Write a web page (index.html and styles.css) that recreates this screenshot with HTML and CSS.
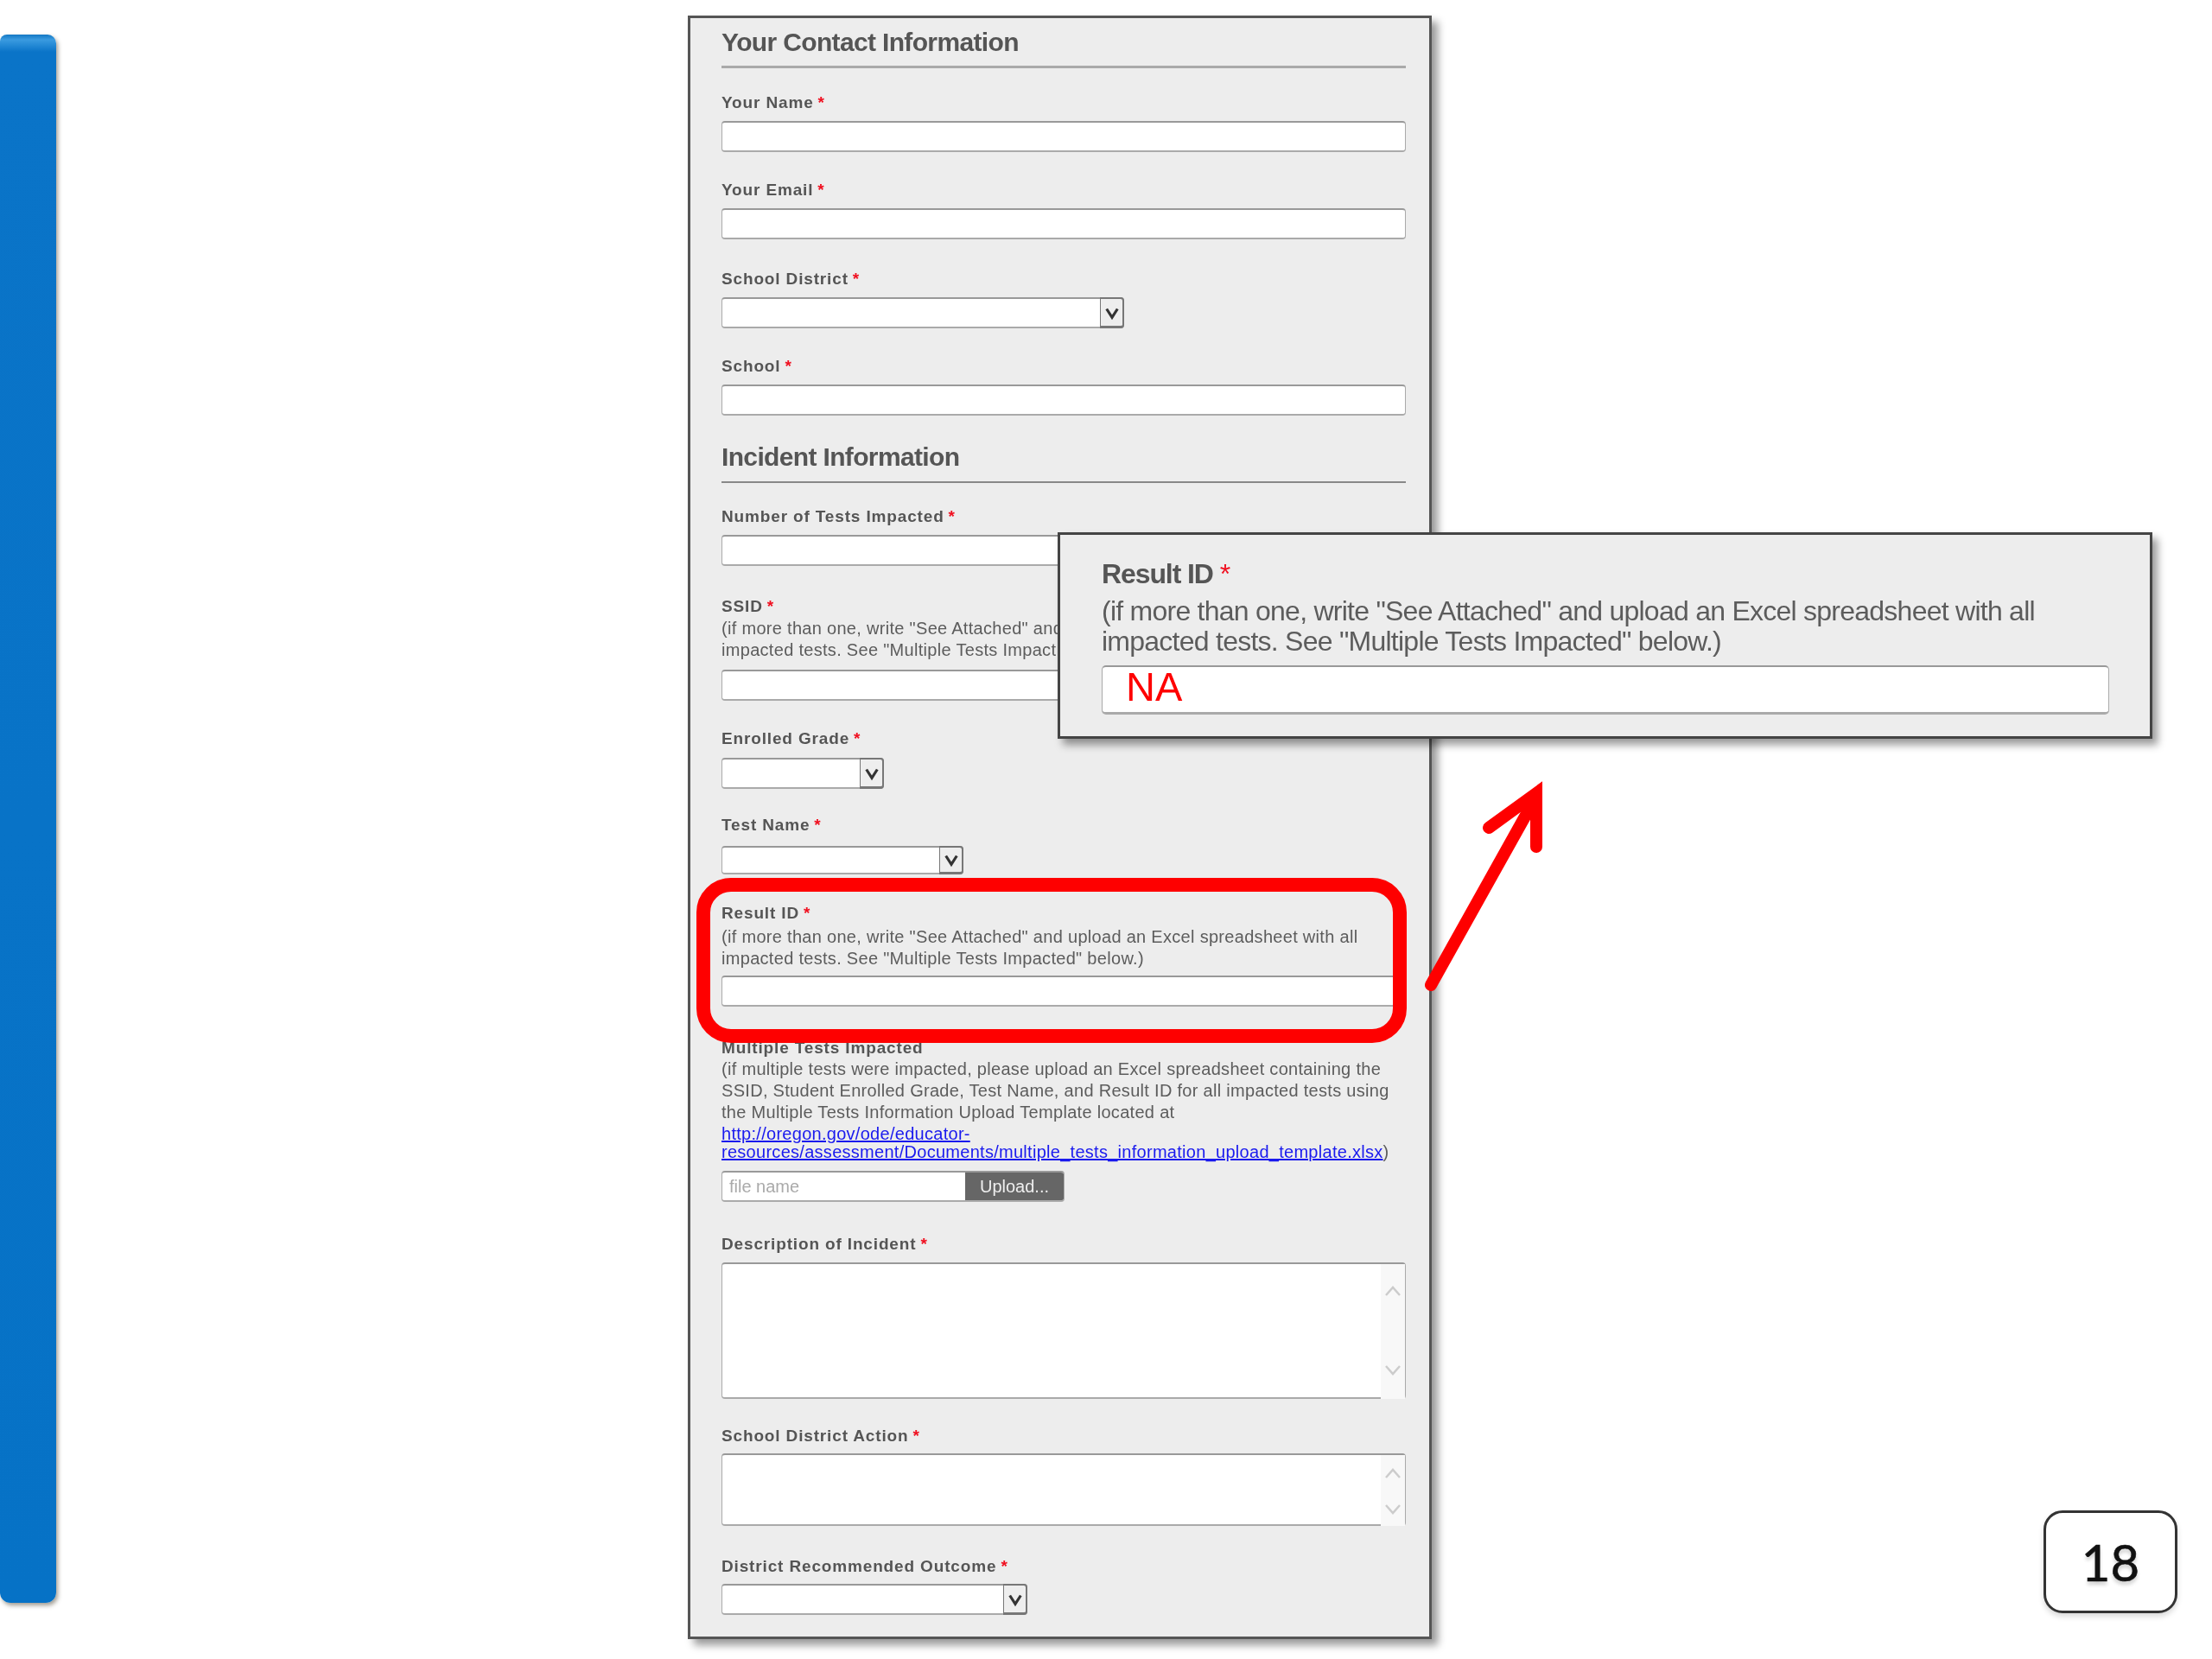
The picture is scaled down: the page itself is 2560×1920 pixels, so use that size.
FILE: index.html
```html
<!DOCTYPE html>
<html lang="en">
<head>
    <meta charset="UTF-8">
    <title>Incident Form</title>
    <link rel="stylesheet" href="styles.css">
</head>
<body>
    <div class="slide">
        <div class="side-bar"></div>

        <div class="form-panel">
            <h2 class="section-title">Your Contact Information</h2>

            <div class="field first">
                <label>Your Name<span class="req">*</span></label>
                <input type="text" class="text-box">
            </div>
            <div class="field email">
                <label>Your Email<span class="req">*</span></label>
                <input type="text" class="text-box">
            </div>
            <div class="field">
                <label>School District<span class="req">*</span></label>
                <div class="select-box w-district">
                    <div class="select-value"></div>
                    <div class="select-btn"><svg viewBox="0 0 20 20"><path d="M3 5 L10 16 L17 5"/></svg></div>
                </div>
            </div>
            <div class="field">
                <label>School<span class="req">*</span></label>
                <input type="text" class="text-box">
            </div>

            <h2 class="section-title second">Incident Information</h2>

            <div class="field number">
                <label>Number of Tests Impacted<span class="req">*</span></label>
                <input type="text" class="text-box">
            </div>
            <div class="field ssid">
                <label>SSID<span class="req">*</span></label>
                <div class="hint">(if more than one, write "See Attached" and<br>impacted tests. See "Multiple Tests Impact</div>
                <input type="text" class="text-box">
            </div>
            <div class="field grade">
                <label>Enrolled Grade<span class="req">*</span></label>
                <div class="select-box w-grade">
                    <div class="select-value"></div>
                    <div class="select-btn"><svg viewBox="0 0 20 20"><path d="M3 5 L10 16 L17 5"/></svg></div>
                </div>
            </div>
            <div class="field test-name">
                <label>Test Name<span class="req">*</span></label>
                <div class="select-box w-test">
                    <div class="select-value"></div>
                    <div class="select-btn"><svg viewBox="0 0 20 20"><path d="M3 5 L10 16 L17 5"/></svg></div>
                </div>
            </div>
            <div class="field result">
                <label>Result ID<span class="req">*</span></label>
                <div class="hint">(if more than one, write "See Attached" and upload an Excel spreadsheet with all<br>impacted tests. See "Multiple Tests Impacted" below.)</div>
                <input type="text" class="text-box">
            </div>
            <div class="field multiple">
                <label>Multiple Tests Impacted</label>
                <div class="hint">(if multiple tests were impacted, please upload an Excel spreadsheet containing the<br>SSID, Student Enrolled Grade, Test Name, and Result ID for all impacted tests using<br>the Multiple Tests Information Upload Template located at</div>
                <div class="link-block"><a href="#">http://oregon.gov/ode/educator-<br>resources/assessment/Documents/multiple_tests_information_upload_template.xlsx</a>)</div>
                <div class="upload">
                    <div class="upload-name">file name</div>
                    <div class="upload-btn">Upload...</div>
                </div>
            </div>
            <div class="field description">
                <label>Description of Incident<span class="req">*</span></label>
                <div class="area-box tall">
                    <div class="area-scroll">
                        <svg viewBox="0 0 20 14"><path d="M2 12 L10 3 L18 12"/></svg>
                        <svg viewBox="0 0 20 14"><path d="M2 2 L10 11 L18 2"/></svg>
                    </div>
                </div>
            </div>
            <div class="field action">
                <label>School District Action<span class="req">*</span></label>
                <div class="area-box short">
                    <div class="area-scroll">
                        <svg viewBox="0 0 20 14"><path d="M2 12 L10 3 L18 12"/></svg>
                        <svg viewBox="0 0 20 14"><path d="M2 2 L10 11 L18 2"/></svg>
                    </div>
                </div>
            </div>
            <div class="field outcome">
                <label>District Recommended Outcome<span class="req">*</span></label>
                <div class="select-box w-outcome">
                    <div class="select-value"></div>
                    <div class="select-btn"><svg viewBox="0 0 20 20"><path d="M3 5 L10 16 L17 5"/></svg></div>
                </div>
            </div>
        </div>

        <!-- annotations on top of the form -->
        <div class="red-box"></div>
        <svg class="red-arrow" viewBox="0 0 160 260">
            <path d="M8 244 L122 40"/>
            <path d="M75 62 L130 22 L130 84"/>
        </svg>

        <div class="callout">
            <label>Result ID<span class="req">*</span></label>
            <div class="callout-hint">(if more than one, write "See Attached" and upload an Excel spreadsheet with all<br>impacted tests. See "Multiple Tests Impacted" below.)</div>
            <div class="callout-input">NA</div>
        </div>

        <div class="page-num">18</div>
    </div>
</body>
</html>
```
FILE: styles.css
```css
body {
    margin: 0;
    background-color: white;
    font-family: "Liberation Sans", Arial, sans-serif;
}
.slide {
    position: relative;
    width: 2560px;
    height: 1920px;
    overflow: hidden;
    display: flex;
    align-items: flex-start;
}
.side-bar {
    width: 65px;
    height: 1815px;
    margin-top: 40px;
    border-radius: 8px 10px 12px 12px;
    background: linear-gradient(#1478c4, #3a9be0 6px, #0a74c8 20px, #0672c6);
    box-shadow: 2px 3px 5px rgba(70, 60, 40, 0.5);
    filter: blur(0.5px);
}
.form-panel {
    box-sizing: border-box;
    width: 861px;
    height: 1879px;
    margin: 18px 0 0 731px;
    padding: 3px 27px 0 36px;
    background-color: #ededed;
    border: 3px solid #555;
    box-shadow: 7px 7px 9px rgba(0, 0, 0, 0.4);
    filter: blur(0.7px);
}
.section-title {
    margin: 0;
    height: 50px;
    line-height: 50px;
    padding-bottom: 2px;
    border-bottom: 3px solid #aaa;
    font-size: 30px;
    font-weight: bold;
    letter-spacing: -0.65px;
    color: #555;
}
.section-title.second {
    margin-top: -4px;
    height: 48px;
    line-height: 40px;
    padding-bottom: 0;
    border-bottom-width: 2px;
    border-bottom-color: #888;
}
.field {
    margin-bottom: 32px;
}
.field.first {
    margin-top: 28px;
}
.field.email {
    margin-bottom: 34px;
}
.field.number {
    margin-top: 27px;
    margin-bottom: 35px;
}
.field.ssid {
    margin-bottom: 32px;
}
.field.grade {
    margin-bottom: 30px;
}
.field.grade label {
    margin-bottom: 10px;
}
.field.test-name {
    margin-bottom: 33px;
}
.field.test-name label {
    margin-bottom: 12px;
}
.field.result {
    margin-bottom: 36px;
}
.field.multiple {
    margin-bottom: 37px;
}
.field.description {
    margin-bottom: 31px;
}
.field.action {
    margin-bottom: 35px;
}
.field.action label {
    margin-bottom: 8px;
}
.field.outcome {
    margin-bottom: 0;
}
.field.outcome label {
    margin-bottom: 8px;
}
label {
    display: block;
    height: 24px;
    line-height: 24px;
    margin-bottom: 9px;
    font-size: 19px;
    font-weight: bold;
    color: #555;
    letter-spacing: 0.85px;
}
.req {
    color: #f01020;
    margin-left: 5px;
}
.text-box, .select-box, .area-box, .upload {
    box-sizing: border-box;
    display: block;
    background-color: white;
    border: 1px solid #aaa;
    border-top: 2px solid #999;
    border-bottom: 2px solid #aaa;
    border-radius: 4px;
}
.text-box {
    width: 100%;
    height: 36px;
    padding: 0;
}
.select-box {
    display: flex;
    height: 36px;
}
.select-value {
    flex: 1;
}
.select-btn {
    box-sizing: border-box;
    width: 28px;
    margin: -2px -1px -2px 0;
    background-color: #eee;
    border: 2px solid #777;
    border-left-width: 1px;
    border-bottom-width: 3px;
    border-radius: 0 4px 4px 0;
    display: flex;
    align-items: center;
    justify-content: center;
}
.select-btn svg {
    width: 18px;
    height: 18px;
}
.select-btn path {
    fill: none;
    stroke: #333;
    stroke-width: 3.5;
}
.w-district { width: 466px; }
.w-grade { width: 188px; }
.w-test { width: 280px; height: 33px; }
.w-outcome { width: 354px; }
.hint {
    margin-top: -6px;
    margin-bottom: 7px;
    font-size: 20px;
    line-height: 25px;
    letter-spacing: 0.3px;
    color: #5c5c5c;
    white-space: nowrap;
}
.ssid .hint {
    margin-top: -8px;
    margin-bottom: 10px;
}
.multiple .hint {
    margin-top: -9px;
    margin-bottom: 0;
}
.link-block {
    margin-top: 2px;
    font-size: 20px;
    line-height: 21px;
    letter-spacing: 0.28px;
    color: #5c5c5c;
    white-space: nowrap;
}
.link-block a {
    color: #1a1aee;
}
.upload {
    display: flex;
    width: 397px;
    height: 36px;
    margin-top: 11px;
    overflow: hidden;
}
.upload-name {
    flex: 1;
    padding-left: 8px;
    line-height: 32px;
    font-size: 20px;
    color: #aaa;
}
.upload-btn {
    width: 114px;
    text-align: center;
    line-height: 32px;
    font-size: 20px;
    color: #eee;
    background-color: #666;
}
.area-box {
    position: relative;
}
.area-box.tall { height: 158px; }
.area-box.short { height: 84px; }
.area-scroll {
    box-sizing: border-box;
    width: 28px;
    height: calc(100% + 2px);
    margin-left: auto;
    background-color: #f8f8f8;
    display: flex;
    flex-direction: column;
    align-items: center;
    justify-content: space-between;
}
.tall .area-scroll { padding: 24px 0 26px; }
.short .area-scroll { padding: 14px 0 12px; }
.area-scroll svg {
    width: 20px;
    height: 14px;
}
.area-scroll path {
    fill: none;
    stroke: #ccc;
    stroke-width: 2.5;
}
.red-box {
    position: absolute;
    left: 806px;
    top: 1016px;
    width: 822px;
    height: 191px;
    box-sizing: border-box;
    border: 16px solid #fe0000;
    border-radius: 40px;
}
.red-arrow {
    position: absolute;
    left: 1648px;
    top: 896px;
    width: 160px;
    height: 260px;
}
.red-arrow path {
    fill: none;
    stroke: #fe0000;
    stroke-width: 14;
    stroke-linecap: round;
}
.callout {
    position: absolute;
    left: 1224px;
    top: 616px;
    box-sizing: border-box;
    width: 1267px;
    height: 239px;
    padding: 27px 47px 0 48px;
    background-color: #ededed;
    border: 3px solid #444;
    box-shadow: 6px 7px 9px rgba(0, 0, 0, 0.4);
    filter: blur(0.6px);
}
.callout label {
    height: 36px;
    line-height: 36px;
    margin-bottom: 8px;
    font-size: 32px;
    letter-spacing: -1.1px;
}
.callout .req {
    font-weight: normal;
    margin-left: 8px;
}
.callout-hint {
    font-size: 32px;
    line-height: 35px;
    letter-spacing: -0.75px;
    color: #5c5c5c;
    white-space: nowrap;
}
.callout-input {
    box-sizing: border-box;
    height: 57px;
    margin-top: 10px;
    padding-left: 27px;
    line-height: 46px;
    font-size: 47px;
    color: #fe0000;
    background-color: white;
    border: 1px solid #aaa;
    border-top: 2px solid #999;
    border-bottom: 3px solid #aaa;
    border-radius: 5px;
}
.page-num {
    position: absolute;
    left: 2365px;
    top: 1748px;
    box-sizing: border-box;
    width: 155px;
    height: 119px;
    border: 3px solid #333;
    border-radius: 22px;
    background-color: white;
    box-shadow: 0 4px 6px rgba(0, 0, 0, 0.15);
    text-align: center;
    line-height: 113px;
    font-family: Lato, sans-serif;
    font-size: 58px;
    color: #111;
    -webkit-text-stroke: 0.6px #111;
    text-shadow: 0 4px 4px rgba(0, 0, 0, 0.2);
}
```
